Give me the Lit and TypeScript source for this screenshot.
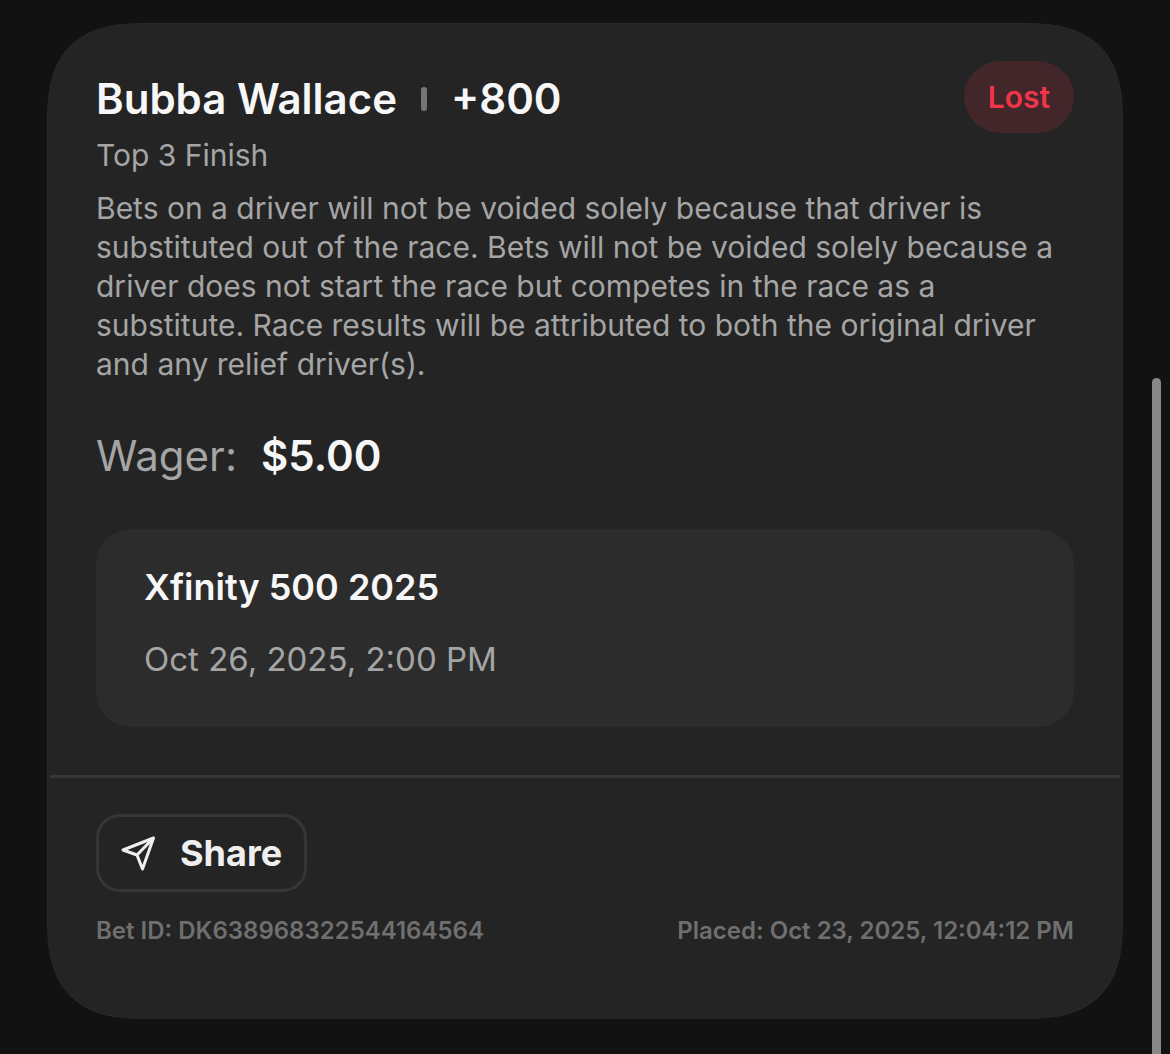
import { html, css, svg, LitElement } from "lit";
import { customElement, property } from "lit/decorators.js";

const sendIcon = svg`
  <path d="M32.5 2 L2 14 L16 19 L21.5 33 Z" />
  <path d="M32.5 2 L16 19" />
`;

@customElement("bet-card")
export class BetCard extends LitElement {
  static styles = css`
    :host {
      display: block;
    }
    .card {
      background: #242424;
      border-radius: 72px;
      border: 1px solid #282828;
    }
    @supports (corner-shape: superellipse(1.4)) {
      .card {
        border-radius: 100px;
        corner-shape: superellipse(1.4);
      }
    }
    .main {
      padding: 37px 48px 48px;
    }
    .heading {
      display: flex;
      justify-content: space-between;
      align-items: flex-start;
    }
    .title {
      display: flex;
      align-items: center;
      gap: 24px;
      margin: 0;
      padding-top: 12px;
      font-size: 42px;
      line-height: 52px;
      font-weight: 600;
      color: #f7f7f7;
    }
    .divider {
      width: 6px;
      height: 24px;
      border-radius: 3px;
      background: #767676;
    }
    .status {
      padding: 18px 24px;
      border-radius: 36px;
      font-size: 30px;
      line-height: 36px;
      font-weight: 600;
      color: #f0344a;
      background: #42262a;
    }
    .market,
    .rules {
      margin: 3px 0 0;
      font-size: 30px;
      line-height: 39px;
      color: #a5a5a5;
    }
    .rules {
      margin-top: 14px;
    }
    .wager {
      display: flex;
      gap: 24px;
      margin: 46px 0 47px;
      font-size: 42px;
      line-height: 52px;
      color: #a5a5a5;
    }
    .wager strong {
      font-weight: 600;
      color: #f7f7f7;
    }
    .event {
      padding: 34px 48px 44px;
      border-radius: 36px;
      background: #2c2c2c;
    }
    .event h2 {
      margin: 0 0 24px;
      font-size: 36px;
      line-height: 48px;
      font-weight: 600;
      color: #f7f7f7;
    }
    .event time {
      display: block;
      font-size: 33px;
      line-height: 48px;
      color: #a5a5a5;
    }
    .footer {
      margin: 0 2px;
      padding: 36px 46px 72px;
      border-top: 3px solid #363636;
    }
    .share {
      display: flex;
      align-items: center;
      gap: 24px;
      padding: 13px 22px;
      border: 3px solid #363636;
      border-radius: 24px;
      background: none;
      font: 700 36px/46px Inter, sans-serif;
      color: #efefef;
    }
    .share svg {
      width: 35px;
      height: 35px;
      fill: none;
      stroke: currentColor;
      stroke-width: 3;
      stroke-linejoin: round;
    }
    .meta {
      display: flex;
      justify-content: space-between;
      margin-top: 24px;
      font-size: 24px;
      line-height: 30px;
      font-weight: 600;
      color: #6f6f6f;
    }
  `;

  @property() selection = "";
  @property() odds = "";
  @property() status = "";
  @property() market = "";
  @property() rules = "";
  @property() wager = "";
  @property() event = "";
  @property() starts = "";
  @property() betId = "";
  @property() placed = "";

  render() {
    return html`
      <article class="card">
        <div class="main">
          <header class="heading">
            <h1 class="title">
              <span>${this.selection}</span>
              <span class="divider"></span>
              <span>${this.odds}</span>
            </h1>
            <span class="status">${this.status}</span>
          </header>
          <p class="market">${this.market}</p>
          <p class="rules">${this.rules}</p>
          <div class="wager">
            <span>Wager:</span>
            <strong>${this.wager}</strong>
          </div>
          <section class="event">
            <h2>${this.event}</h2>
            <time>${this.starts}</time>
          </section>
        </div>
        <footer class="footer">
          <button class="share" type="button">
            <svg viewBox="0 0 35 35" aria-hidden="true">${sendIcon}</svg>
            Share
          </button>
          <div class="meta">
            <span>Bet ID: ${this.betId}</span>
            <span>Placed: ${this.placed}</span>
          </div>
        </footer>
      </article>
    `;
  }
}

@customElement("app-root")
export class AppRoot extends LitElement {
  static styles = css`
    :host {
      display: block;
      position: relative;
      box-sizing: border-box;
      min-height: 100vh;
      padding: 23px 47px 34px;
      overflow: hidden;
      background: #121212;
      font-family: Inter, sans-serif;
    }
    .scroll-thumb {
      position: absolute;
      top: 378px;
      right: 9px;
      bottom: -9px;
      width: 9px;
      border-radius: 5px;
      background: #888;
    }
  `;

  render() {
    return html`
      <bet-card
        selection="Bubba Wallace"
        odds="+800"
        status="Lost"
        market="Top 3 Finish"
        rules="Bets on a driver will not be voided solely because that driver is substituted out of the race. Bets will not be voided solely because a driver does not start the race but competes in the race as a substitute. Race results will be attributed to both the original driver and any relief driver(s)."
        wager="$5.00"
        event="Xfinity 500 2025"
        starts="Oct 26, 2025, 2:00 PM"
        betId="DK638968322544164564"
        placed="Oct 23, 2025, 12:04:12 PM"
      ></bet-card>
      <div class="scroll-thumb"></div>
    `;
  }
}
